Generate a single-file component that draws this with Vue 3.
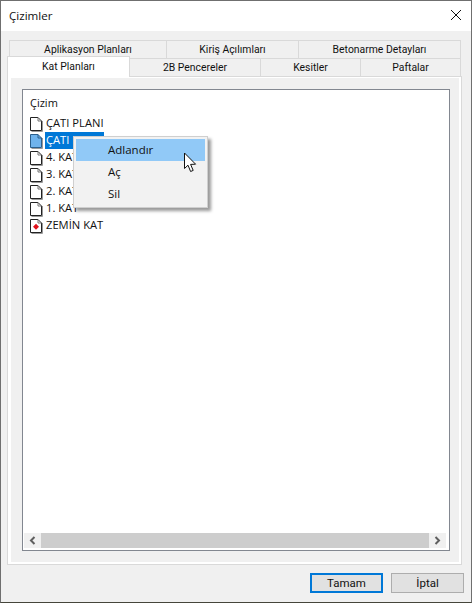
<template>
  <div class="window">
    <div class="titlebar">
      <span class="title">Çizimler</span>
      <svg class="close" width="12" height="12" viewBox="0 0 12 12">
        <path d="M1 1 L11 11 M11 1 L1 11" stroke="#111" stroke-width="1" fill="none" />
      </svg>
    </div>

    <div class="body">
      <div class="tabs">
        <div class="tab-row back">
          <div v-for="tab in backTabs" :key="tab.name" class="tab" :style="{ width: tab.width + 'px' }">{{ tab.name }}</div>
        </div>
        <div class="tab-row front">
          <div
            v-for="tab in frontTabs"
            :key="tab.name"
            class="tab"
            :class="{ active: tab.active }"
            :style="{ width: tab.width + 'px' }"
          >{{ tab.name }}</div>
        </div>
      </div>

      <div class="pane">
        <div class="pane-inner">
          <div class="listbox">
            <div class="list-content">
              <div class="list-header">Çizim</div>
              <div v-for="(row, i) in rows" :key="i" class="row" :class="{ selected: row.selected }">
                <svg class="page" width="14" height="16" viewBox="0 0 14 16">
                  <path
                    d="M0.5 1.5 H8 L11.5 5 V14.5 H0.5 Z"
                    :fill="row.selected ? '#6fb3ec' : '#fff'"
                    :stroke="row.selected ? '#2b5f8c' : '#222'"
                    stroke-width="1"
                  />
                  <path d="M8 1.5 V5 H11.5" fill="none" :stroke="row.selected ? '#2b5f8c' : '#777'" stroke-width="1" />
                  <path d="M12.5 5 V15.5 H1.5" fill="none" stroke="#999" stroke-width="1" />
                  <path v-if="row.marked" d="M6 5.8 L9 8.8 L6 11.8 L3 8.8 Z" fill="#e0101a" />
                </svg>
                <span class="row-text">{{ row.name }}</span>
              </div>
            </div>
            <div class="scrollbar">
              <div class="scroll-btn">
                <svg width="9" height="9" viewBox="0 0 9 9">
                  <path d="M6.5 1 L3 4.5 L6.5 8" fill="none" stroke="#5f5f5f" stroke-width="2" />
                </svg>
              </div>
              <div class="scroll-thumb"></div>
              <div class="scroll-btn">
                <svg width="9" height="9" viewBox="0 0 9 9">
                  <path d="M2.5 1 L6 4.5 L2.5 8" fill="none" stroke="#5f5f5f" stroke-width="2" />
                </svg>
              </div>
            </div>
          </div>
        </div>
      </div>

      <div class="footer">
        <button class="btn default">Tamam</button>
        <button class="btn">İptal</button>
      </div>
    </div>

    <div class="menu">
      <div v-for="(item, i) in menuItems" :key="item" class="menu-item" :class="{ hover: i === 0 }">{{ item }}</div>
    </div>

    <svg class="cursor" width="15" height="21" viewBox="0 0 15 21">
      <path
        d="M1.5 1 V16.5 L5 13.2 L7.6 19.5 L10.2 18.4 L7.6 12.4 L12.6 12.2 Z"
        fill="#fff"
        stroke="#111"
        stroke-width="1"
      />
    </svg>
  </div>
</template>

<script setup>
const backTabs = [
  { name: "Aplikasyon Planları", width: 158 },
  { name: "Kiriş Açılımları", width: 133 },
  { name: "Betonarme Detayları", width: 163 },
]

const frontTabs = [
  { name: "Kat Planları", width: 123, active: true },
  { name: "2B Pencereler", width: 132 },
  { name: "Kesitler", width: 101 },
  { name: "Paftalar", width: 101 },
]

const rows = [
  { name: "ÇATI PLANI" },
  { name: "ÇATI PLANI", selected: true },
  { name: "4. KAT" },
  { name: "3. KAT" },
  { name: "2. KAT" },
  { name: "1. KAT" },
  { name: "ZEMİN KAT", marked: true },
]

const menuItems = ["Adlandır", "Aç", "Sil"]
</script>

<style scoped>
.window {
  position: relative;
  width: 472px;
  height: 603px;
  box-sizing: border-box;
  border: 1px solid #6f6f6f;
  border-bottom-color: #45453a;
  background: #f0f0f0;
  display: flex;
  flex-direction: column;
  font-family: "Open Sans", "Noto Sans", sans-serif;
  font-size: 11.2px;
  color: #111;
  overflow: hidden;
}
.titlebar {
  height: 30px;
  flex: none;
  box-sizing: border-box;
  background: #fff;
  display: flex;
  align-items: center;
  justify-content: space-between;
  padding: 0 9px 2px 8px;
}
.title {
  font-size: 11.6px;
}
.body {
  flex: 1;
  display: flex;
  flex-direction: column;
  padding: 0 9px 0 6px;
}
.tabs {
  padding-top: 9px;
  height: 36px;
  flex: none;
  display: flex;
  flex-direction: column;
}
.tab-row {
  display: flex;
  height: 18px;
  flex: none;
}
.back {
  margin-left: 2px;
}
.tab {
  box-sizing: border-box;
  border: 1px solid #d9d9d9;
  border-bottom: none;
  margin-left: -1px;
  display: flex;
  align-items: center;
  justify-content: center;
  background: #f0f0f0;
  font-family: Roboto, "Liberation Sans", sans-serif;
  font-size: 10.4px;
}
.tab:first-child {
  margin-left: 0;
}
.front .tab {
  height: 18px;
}
.front .active {
  position: relative;
  z-index: 1;
  height: 21px;
  margin-top: -2px;
  background: #fff;
  padding-bottom: 1px;
}
.pane {
  height: 489px;
  flex: none;
  box-sizing: border-box;
  border: 1px solid #d9d9d9;
  background: #fff;
  padding: 1px 2px 2px 3px;
}
.pane-inner {
  height: 100%;
  background: #f0f0f0;
  padding: 11px 9px 11px 11px;
  box-sizing: border-box;
}
.listbox {
  height: 100%;
  box-sizing: border-box;
  border: 1px solid #828790;
  background: #fff;
  display: flex;
  flex-direction: column;
  padding: 0 3px 2px 1px;
}
.list-content {
  flex: 1;
  padding: 5px 0 0 6px;
}
.list-header {
  height: 20px;
  line-height: 15px;
  font-size: 11px;
}
.row {
  display: flex;
  align-items: center;
  height: 17px;
}
.page {
  flex: none;
  margin-right: 1px;
}
.row-text {
  padding-left: 1px;
  height: 17px;
  line-height: 16px;
  white-space: nowrap;
}
.selected .row-text {
  background: #0078d7;
  color: #fff;
}
.scrollbar {
  display: flex;
  height: 15px;
  flex: none;
}
.scroll-btn {
  width: 17px;
  background: #f0f0f0;
  display: flex;
  align-items: center;
  justify-content: center;
}
.scroll-thumb {
  flex: 1;
  background: #cdcdcd;
}
.footer {
  flex: 1;
  display: flex;
  justify-content: flex-end;
  gap: 8px;
  padding: 8px 0 0 0;
  margin-right: -2px;
}
.btn {
  width: 73px;
  height: 20px;
  box-sizing: border-box;
  border: 1px solid #adadad;
  background: #e1e1e1;
  font-family: Roboto, "Liberation Sans", sans-serif;
  font-size: 11.5px;
  color: #111;
  padding: 0;
}
.default {
  border: 2px solid #0078d7;
}
.menu {
  position: absolute;
  left: 72px;
  top: 135px;
  width: 135px;
  height: 72px;
  box-sizing: border-box;
  border: 1px solid #cfcfcf;
  background: #f2f2f2;
  padding: 2px;
  box-shadow: 3px 3px 3px rgba(0, 0, 0, 0.4);
}
.menu-item {
  height: 22px;
  line-height: 22px;
  padding-left: 32px;
  font-size: 11.5px;
}
.hover {
  background: #91c9f7;
}
.cursor {
  position: absolute;
  left: 182px;
  top: 151px;
}
</style>

<style>
html,
body {
  margin: 0;
  padding: 0;
  background: #f0f0f0;
}
</style>
